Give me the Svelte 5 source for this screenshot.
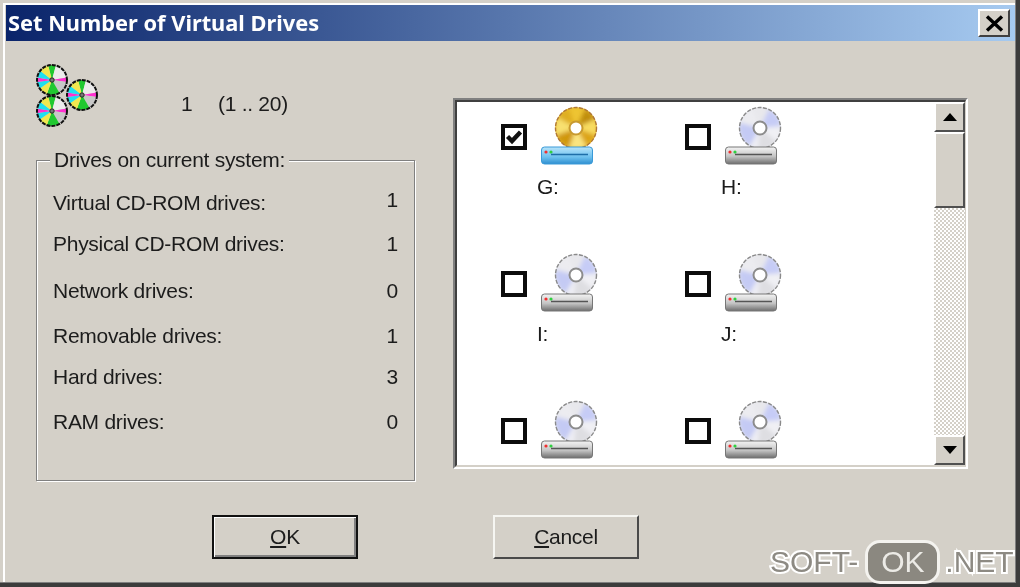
<script>
  const stats = [
    ['Virtual CD-ROM drives:', 1],
    ['Physical CD-ROM drives:', 1],
    ['Network drives:', 0],
    ['Removable drives:', 1],
    ['Hard drives:', 3],
    ['RAM drives:', 0]
  ];
  const drives = [
    { l: 'G:', on: true },
    { l: 'H:' },
    { l: 'I:' },
    { l: 'J:' },
    { l: '' },
    { l: '' }
  ];
  function wedge(cx, cy, r, a0, a1) {
    const p = (a) => {
      const t = ((a - 90) * Math.PI) / 180;
      return `${(cx + r * Math.cos(t)).toFixed(2)} ${(cy + r * Math.sin(t)).toFixed(2)}`;
    };
    return `M${cx} ${cy}L${p(a0)}A${r} ${r} 0 0 1 ${p(a1)}Z`;
  }
  const rainbow = [
    [-15, 15, '#20c830'], [15, 80, '#ececec'], [80, 98, '#ff30d0'], [98, 150, '#c8c8c8'],
    [150, 200, '#20c830'], [200, 235, '#f0e850'], [235, 262, '#20e0f0'],
    [262, 280, '#ff30d0'], [280, 308, '#20e0f0'], [308, 345, '#f0e850']
  ];
  const silver = [
    [-20, 25, '#e8e8ec'], [25, 85, '#c6ccf6'], [85, 130, '#f0f0f4'], [130, 185, '#dedee2'],
    [185, 210, '#eeeef4'], [210, 285, '#c4caf4'], [285, 340, '#ececf0']
  ];
  const gold = [
    [-20, 25, '#eec430'], [25, 65, '#c08e10'], [65, 110, '#f8dc60'], [110, 150, '#dca414'],
    [150, 200, '#fae480'], [200, 250, '#d09810'], [250, 300, '#f8e070'], [300, 340, '#dfae20']
  ];
  const small = [[16, 16], [46, 31], [16, 47]];
</script>

<div class="window">
  <svg class="defs" width="0" height="0" aria-hidden="true">
    <defs>
      <linearGradient id="silverBody" x1="0" y1="0" x2="0" y2="1">
        <stop offset="0" stop-color="#f4f4f4"/><stop offset=".55" stop-color="#c4c4c4"/><stop offset="1" stop-color="#6e6e6e"/>
      </linearGradient>
      <linearGradient id="blueBody" x1="0" y1="0" x2="0" y2="1">
        <stop offset="0" stop-color="#b8e4fa"/><stop offset=".6" stop-color="#6cc0ee"/><stop offset="1" stop-color="#2e8ed0"/>
      </linearGradient>
      <filter id="soft" x="-20%" y="-20%" width="140%" height="140%"><feGaussianBlur stdDeviation="2.2"/></filter>
      <clipPath id="discClip"><circle cx="36" cy="23" r="21"/></clipPath>
    </defs>
  </svg>

  <header class="title">
    <span>Set Number of Virtual Drives</span>
    <button class="close" aria-label="Close">
      <svg width="19" height="17" viewBox="0 0 19 17"><path d="M2 1.5 17 15.5M17 1.5 2 15.5" stroke="#000" stroke-width="3.4" fill="none"/></svg>
    </button>
  </header>

  <main class="content">
    <section class="left">
      <div class="top">
        <svg class="discs" width="64" height="64" viewBox="0 0 64 64">
          {#each small as [x, y]}
            {#each rainbow as [a, b, c]}
              <path d={wedge(x, y, 15, a, b)} fill={c} />
            {/each}
            <circle cx={x} cy={y} r="15" fill="none" stroke="#111" stroke-width="2" stroke-dasharray="4 1" />
            <circle cx={x} cy={y} r="2.2" fill="#777" stroke="#222" />
          {/each}
        </svg>
        <span class="count">1</span>
        <span class="range">(1 .. 20)</span>
      </div>

      <div class="group">
        <span class="legend">Drives on current system:</span>
        {#each stats as [name, v]}
          <div class="row"><span>{name}</span><span class="val">{v}</span></div>
        {/each}
      </div>
    </section>

    <section class="panel">
      <div class="inner">
        <div class="list">
          {#each drives as d}
            <div class="cell">
              <div class="pick">
                <span class="check">
                  {#if d.on}
                    <svg width="18" height="18" viewBox="0 0 18 18"><path d="M2.5 8.5 7 13 15.5 4" stroke="#111" stroke-width="4.4" fill="none"/></svg>
                  {/if}
                </span>
                <svg class="drive" width="58" height="60" viewBox="0 0 58 60">
                  <g clip-path="url(#discClip)">
                    <circle cx="36" cy="23" r="21" fill={d.on ? '#e8bc30' : '#e6e6ea'} />
                    <g filter="url(#soft)">
                      {#each d.on ? gold : silver as [a, b, c]}
                        <path d={wedge(36, 23, 21, a, b)} fill={c} />
                      {/each}
                    </g>
                  </g>
                  <circle cx="36" cy="23" r="20.5" fill="none" stroke={d.on ? '#b07838' : '#8a8a8a'} stroke-width="1.4" stroke-dasharray="4 1.5" />
                  <circle cx="36" cy="23" r="6.5" fill="#fff" stroke={d.on ? '#c89a30' : '#8c8c8c'} stroke-width="2" />
                  <rect x="1.5" y="42" width="51" height="17" rx="3" fill={d.on ? 'url(#blueBody)' : 'url(#silverBody)'} stroke={d.on ? '#3a9ad8' : '#777'} />
                  <circle cx="6" cy="47" r="1.6" fill="#f03030" />
                  <circle cx="11" cy="47" r="1.6" fill="#30d040" />
                  <path d="M11 49.5H48" stroke={d.on ? '#1e6ea8' : '#555'} stroke-width="1.4" />
                </svg>
              </div>
              {#if d.l}<div class="drive-label">{d.l}</div>{/if}
            </div>
          {/each}
        </div>
        <div class="scroll">
          <button class="sbtn" aria-label="Up">
            <svg width="14" height="8" viewBox="0 0 14 8"><path d="M7 0 14 8H0Z"/></svg>
          </button>
          <div class="thumb"></div>
          <div class="track"></div>
          <button class="sbtn" aria-label="Down">
            <svg width="14" height="8" viewBox="0 0 14 8"><path d="M0 0H14L7 8Z"/></svg>
          </button>
        </div>
      </div>
    </section>
  </main>

  <footer class="actions">
    <button class="btn default"><u>O</u>K</button>
    <button class="btn"><u>C</u>ancel</button>
  </footer>

  <div class="mark">
    <span class="mtext">SOFT-</span><span class="pill">OK</span><span class="mtext">.NET</span>
  </div>
</div>

<style>
  :global(body) { margin: 0; background: #d4d0c8; }
  .defs { position: absolute; }
  .window {
    position: relative;
    box-sizing: border-box;
    width: 1020px;
    height: 587px;
    overflow: hidden;
    background: #d4d0c8;
    color: #1c1c1c;
    font: 21px/26px "Liberation Sans", Arial, sans-serif;
    letter-spacing: -0.28px;
    padding: 5px 5px 0 6px;
    box-shadow: inset -4px -4px 0 #3c3c3c, inset -5px -5px 0 #808080, inset 3px 3px 0 #d4d0c8, inset 5px 5px 0 #fff;
    filter: blur(0.5px);
  }
  .title {
    height: 36px;
    display: flex;
    align-items: center;
    justify-content: space-between;
    padding: 0 5px 0 2px;
    background: linear-gradient(90deg, #0a246a, #a6caf0);
    color: #fff;
    font-weight: 700;
    font-size: 21.8px;
    letter-spacing: 0;
    font-family: "Noto Sans", "DejaVu Sans", sans-serif;
  }
  button { font: inherit; color: inherit; padding: 0; background: #d4d0c8; letter-spacing: inherit; }
  .close {
    box-sizing: border-box;
    width: 32px;
    height: 28px;
    display: flex;
    align-items: center;
    justify-content: center;
    border: 2px solid;
    border-color: #fff #404040 #404040 #fff;
  }
  .content {
    display: flex;
    gap: 38px;
    padding: 0 0 0 30px;
    height: 440px;
  }
  .left { width: 379px; }
  .top {
    height: 119px;
    display: flex;
    align-items: flex-start;
    position: relative;
  }
  .discs { margin-top: 23px; }
  .count { margin: 50px 0 0 81px; width: 37px; }
  .range { margin-top: 50px; }
  .group {
    box-sizing: border-box;
    height: 321px;
    border: 1px solid #808080;
    box-shadow: inset 1px 1px 0 #fff, 1px 1px 0 #fff;
    padding: 0 16px 0 16px;
  }
  .legend {
    display: inline-block;
    margin: -14px 0 0 -3px;
    padding: 0 4px;
    background: #d4d0c8;
    vertical-align: top;
  }
  .row { display: flex; justify-content: space-between; height: 26px; }
  .row:nth-of-type(1) { margin-top: 3px; }
  .row:nth-of-type(1) .val { margin-top: -3px; }
  .row:nth-of-type(2) { margin-top: 15px; }
  .row:nth-of-type(3) { margin-top: 21px; }
  .row:nth-of-type(4) { margin-top: 19px; }
  .row:nth-of-type(5) { margin-top: 15px; }
  .row:nth-of-type(6) { margin-top: 19px; }
  .panel {
    box-sizing: border-box;
    width: 515px;
    height: 371px;
    margin-top: 57px;
    border: 2px solid;
    border-color: #808080 #fff #fff #808080;
  }
  .inner {
    box-sizing: border-box;
    height: 100%;
    display: flex;
    background: #fff;
    border: 2px solid;
    border-color: #404040 #d4d0c8 #d4d0c8 #404040;
    border-right-width: 1px;
  }
  .list {
    flex: 1;
    overflow: hidden;
    display: grid;
    grid-template-columns: 184px 184px;
    grid-auto-rows: 147px;
    padding: 3px 0 0 44px;
  }
  .pick { display: flex; gap: 13px; align-items: flex-start; }
  .check {
    box-sizing: border-box;
    width: 26px;
    height: 26px;
    margin-top: 19px;
    border: 4px solid #0c0c0c;
    display: flex;
    align-items: center;
    justify-content: center;
    flex: none;
  }
  .drive { flex: none; }
  .drive-label { margin: 9px 0 0 36px; }
  .scroll { width: 31px; display: flex; flex-direction: column; background: #d4d0c8; }
  .sbtn, .thumb {
    box-sizing: border-box;
    flex: none;
    width: 31px;
    border: 2px solid;
    border-color: #fff #505050 #505050 #fff;
    background: #d4d0c8;
  }
  .sbtn { height: 30px; display: flex; align-items: center; justify-content: center; }
  .thumb { height: 76px; }
  .track {
    flex: 1;
    background: repeating-conic-gradient(#d4d0c8 0 25%, #fff 0 50%) 0 0 / 4px 4px;
  }
  .actions {
    display: flex;
    gap: 135px;
    padding-left: 206px;
    margin-top: 34px;
  }
  .btn {
    box-sizing: border-box;
    width: 146px;
    height: 44px;
    border: 2px solid;
    border-color: #f6f6f2 #4a4a4a #4a4a4a #f6f6f2;
  }
  .default { border-color: #111; box-shadow: inset 1px 1px 0 #fff, inset -2px -2px 0 #808080; }
  .mark {
    position: absolute;
    left: 770px;
    top: 540px;
    height: 44px;
    display: flex;
    align-items: center;
    font-size: 30px;
    line-height: 38px;
    letter-spacing: 0;
  }
  .mtext {
    color: #8d8a83;
    -webkit-text-stroke: 4px #fff;
    paint-order: stroke fill;
  }
  .pill {
    box-sizing: border-box;
    width: 75px;
    height: 44px;
    margin: 0 5px 0 7px;
    border: 3px solid #f4f3ef;
    border-radius: 15px;
    background: #8b8880;
    color: #ecebe6;
    text-align: center;
  }
</style>
